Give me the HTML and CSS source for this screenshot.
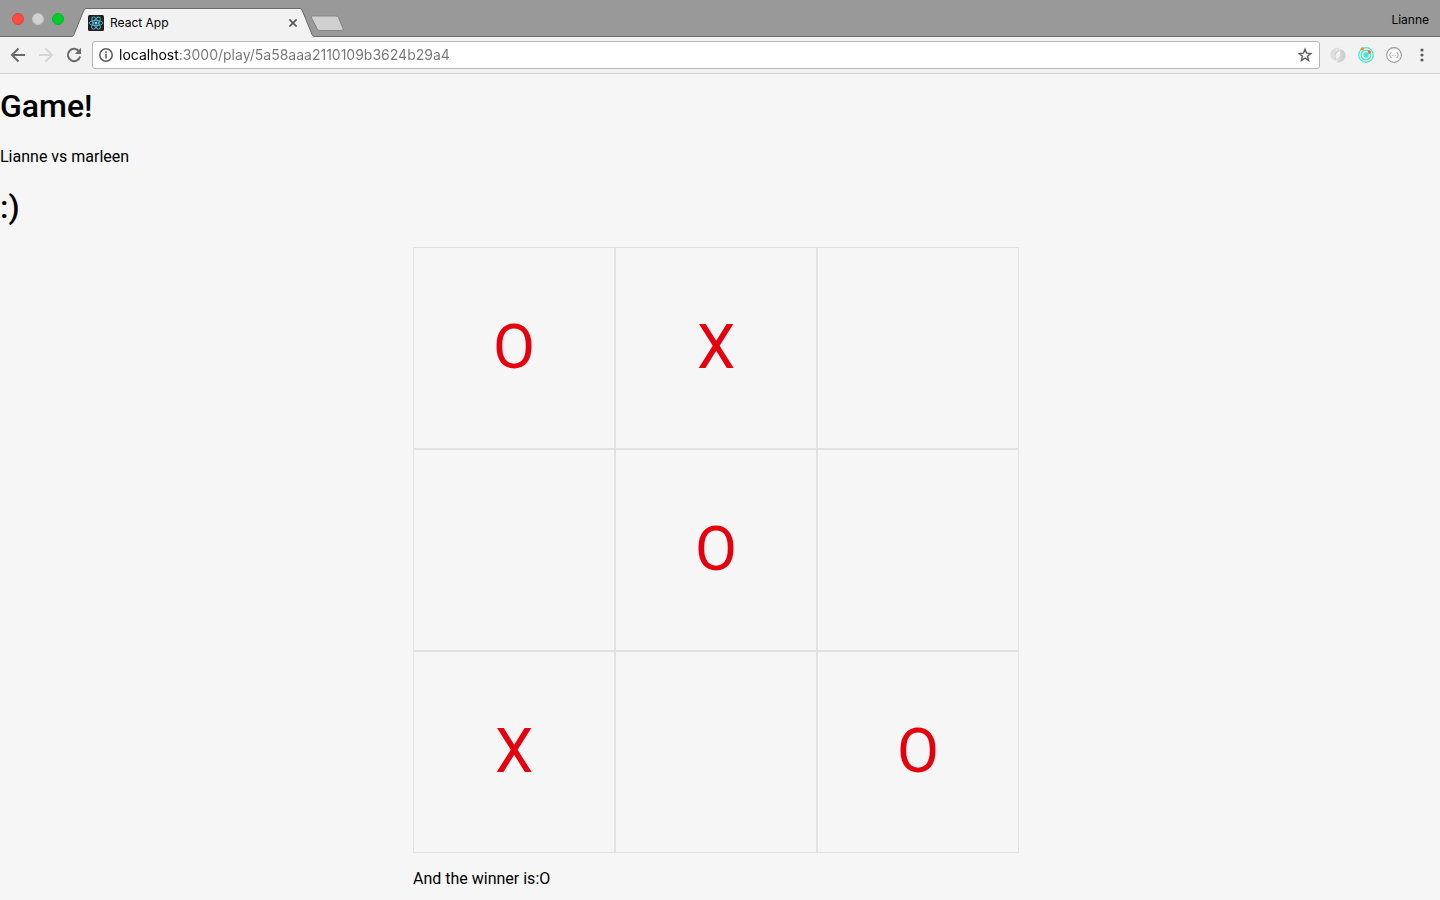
FILE: index.html
```html
<!DOCTYPE html>
<html lang="en">
<head>
<meta charset="utf-8">
<title>React App</title>
<link rel="stylesheet" href="styles.css">
</head>
<body>
<header class="browser">
  <div class="tabstrip">
    <div class="lights">
      <button class="light light-close" aria-label="Close window"></button>
      <button class="light light-min" aria-label="Minimize window"></button>
      <button class="light light-max" aria-label="Zoom window"></button>
    </div>
    <div class="tab">
      <svg class="tab-edge" width="14" height="29" viewBox="0 0 14 29" aria-hidden="true"><path d="M0 28.500Q1.500 28 2 26.500L11.500 3Q12.500.500 14 .500V29H0z" fill="#f2f2f2"/><path d="M0 28.500Q1.500 28 2 26.500L11.500 3Q12.500.500 14 .500" fill="none" stroke="#6b6b6b"/></svg>
      <div class="tab-body">
        <svg width="16" height="16" viewBox="0 0 16 16" aria-hidden="true"><rect width="16" height="16" rx="1.500" fill="#222"/><g fill="none" stroke="#55b8d5" stroke-width=".9"><ellipse cx="8" cy="8" rx="6.800" ry="2.600"/><ellipse cx="8" cy="8" rx="6.800" ry="2.600" transform="rotate(60 8 8)"/><ellipse cx="8" cy="8" rx="6.800" ry="2.600" transform="rotate(120 8 8)"/></g><circle cx="8" cy="8" r="1.500" fill="#61dafb"/></svg>
        <span class="tab-title">React App</span>
        <button class="icon-button" aria-label="Close tab"><svg width="8" height="8" viewBox="0 0 8 8"><path d="M.400.400l7.200 7.200M7.600.400L.400 7.600" stroke="#555" stroke-width="1.600"/></svg></button>
      </div>
      <svg class="tab-edge" width="14" height="29" viewBox="0 0 14 29" aria-hidden="true"><path d="M14 28.500Q12.500 28 12 26.500L2.500 3Q1.500.500 0 .500V29H14z" fill="#f2f2f2"/><path d="M14 28.500Q12.500 28 12 26.500L2.500 3Q1.500.500 0 .500" fill="none" stroke="#6b6b6b"/></svg>
    </div>
    <button class="icon-button new-tab" aria-label="New tab"><svg width="36" height="17" viewBox="0 0 36 17"><path d="M3.500 1H27Q28.800 1 29.500 2.500L34 13.500Q35 15.500 33 15.500H11Q9 15.500 8.300 14L2.500 2.800Q2 1 3.500 1z" fill="#d0d0d0" stroke="#858585"/></svg></button>
    <span class="profile">Lianne</span>
  </div>
  <div class="toolbar">
    <nav class="nav" aria-label="History">
      <button class="icon-button" aria-label="Back"><svg width="16" height="16" viewBox="0 0 16 16"><path d="M15 8H2.500M8.500 1.500L2 8l6.500 6.500" fill="none" stroke="#6a6a6a" stroke-width="2"/></svg></button>
      <button class="icon-button" aria-label="Forward"><svg width="16" height="16" viewBox="0 0 16 16"><path d="M1 8h12.500M7.500 1.500L14 8l-6.500 6.500" fill="none" stroke="#d5d5d5" stroke-width="2"/></svg></button>
      <button class="icon-button" aria-label="Reload"><svg width="16" height="16" viewBox="0 0 16 16"><path d="M13.200 4.400A6.200 6.200 0 1 0 14.100 9.500" fill="none" stroke="#6a6a6a" stroke-width="2"/><path d="M15 .800V7H8.800z" fill="#6a6a6a"/></svg></button>
    </nav>
    <div class="omnibox">
      <svg width="14" height="14" viewBox="0 0 14 14" aria-hidden="true"><circle cx="7" cy="7" r="6.200" fill="none" stroke="#5c5c5c" stroke-width="1.500"/><path d="M7 6v4.500M7 3.300v1.700" stroke="#5c5c5c" stroke-width="1.600"/></svg>
      <input class="url" type="text" aria-label="Address" value="localhost:3000/play/5a58aaa2110109b3624b29a4">
      <button class="icon-button" aria-label="Bookmark"><svg width="16" height="16" viewBox="0 0 16 16"><path d="M8 2.200l1.600 4 4.200.300-3.200 2.800 1 4.200L8 11.200l-3.600 2.300 1-4.200-3.200-2.800 4.200-.300z" fill="none" stroke="#5c5c5c" stroke-width="1.400"/></svg></button>
    </div>
    <div class="extensions">
      <button class="icon-button" aria-label="Refresh extension"><svg width="16" height="16" viewBox="0 0 16 16"><path d="M10 .800C4 0 0 3.500.300 8c.300 3.500 2.500 5.500 5.700 6C2.500 9 4 3.500 10 .800z" fill="#dedede"/><path d="M6 15.200c6 .800 10-2.700 9.700-7.200-.300-3.500-2.500-5.500-5.700-6 3.500 5 2 10.500-4 13.200z" fill="#d0d0d0"/><path d="M6 13Q2.500 7 9 3M10 3q3.500 6-3 10" fill="none" stroke="#d2d2d2" stroke-width="1.500"/></svg></button>
      <button class="icon-button" aria-label="Orbit extension"><svg width="16" height="16" viewBox="0 0 16 16"><g fill="none" stroke="#3eeacb" stroke-width="1.200"><circle cx="8" cy="8" r="7.300"/><circle cx="8" cy="8" r="4.900"/></g><circle cx="8" cy="8" r="2.700" fill="#3eeacb"/><circle cx="4.300" cy="1.800" r="1.600" fill="#ff8a00"/><circle cx="11.300" cy="5" r="1.700" fill="#ff6530"/></svg></button>
      <button class="icon-button" aria-label="JSON extension"><svg width="16" height="16" viewBox="0 0 16 16"><circle cx="8" cy="8" r="7.400" fill="#fafafa" stroke="#999" stroke-width="1.100"/><path d="M5.500 5.500q-1.200 0-1.200 1.200T3.500 8q.800 0 .800 1.300t1.200 1.200M10.500 5.500q1.200 0 1.200 1.200T12.500 8q-.800 0-.800 1.300t-1.200 1.200M6.500 8.500h.8M8.700 8.500h.8" fill="none" stroke="#999" stroke-width=".9"/></svg></button>
      <button class="icon-button" aria-label="Menu"><svg width="16" height="16" viewBox="0 0 16 16"><g fill="#5c5c5c"><circle cx="8" cy="3" r="1.600"/><circle cx="8" cy="8" r="1.600"/><circle cx="8" cy="13" r="1.600"/></g></svg></button>
    </div>
  </div>
</header>
<main class="page">
  <h1 class="title">Game!</h1>
  <p class="players">Lianne vs marleen</p>
  <h1 class="title">:)</h1>
  <section class="game">
    <div class="board">
      <button class="cell" aria-label="Square 1: O">O</button>
      <button class="cell" aria-label="Square 2: X">X</button>
      <button class="cell" aria-label="Square 3"></button>
      <button class="cell" aria-label="Square 4"></button>
      <button class="cell" aria-label="Square 5: O">O</button>
      <button class="cell" aria-label="Square 6"></button>
      <button class="cell" aria-label="Square 7: X">X</button>
      <button class="cell" aria-label="Square 8"></button>
      <button class="cell" aria-label="Square 9: O">O</button>
    </div>
    <p class="winner">And the winner is:O</p>
  </section>
</main>
</body>
</html>
```
FILE: styles.css
```css
* {
  box-sizing: border-box;
}

body {
  margin: 0;
  background: #f6f6f6;
  color: #000;
  font: 16px/20px Roboto, sans-serif;
}

button {
  padding: 0;
  border: 0;
  background: none;
  font: inherit;
}

svg {
  display: block;
}

.browser {
  font: 12px/16px Inter, sans-serif;
}

.tabstrip {
  display: flex;
  align-items: flex-end;
  height: 37px;
  background: #999;
  box-shadow: inset 0 -1px #6b6b6b;
}

.lights {
  display: flex;
  align-self: center;
  gap: 8px;
  width: 72px;
  padding-left: 12px;
}

.light {
  width: 12px;
  height: 12px;
  border: 1px solid;
  border-radius: 50%;
}

.light-close {
  background: #ff4b42;
  border-color: #e33f36;
}

.light-min {
  background: #d2d2d2;
  border-color: #c2c2c2;
}

.light-max {
  background: #00cf28;
  border-color: #00b824;
}

.tab {
  display: flex;
  width: 242px;
}

.tab-edge {
  flex: none;
}

.tab-body {
  display: flex;
  flex: 1;
  align-items: center;
  gap: 6px;
  height: 29px;
  padding: 0 3px 0 2px;
  border-top: 1px solid #6b6b6b;
  background: #f2f2f2;
}

.tab-title {
  flex: 1;
}

.new-tab {
  margin: 0 0 5px -5px;
}

.profile {
  align-self: center;
  margin-left: auto;
  padding: 2px 11px 0 0;
}

.toolbar {
  display: flex;
  align-items: center;
  gap: 10px;
  height: 37px;
  padding: 0 10px;
  border-bottom: 1px solid #d2d2d2;
  background: #f2f2f2;
}

.nav,
.extensions {
  display: flex;
  gap: 12px;
}

.omnibox {
  display: flex;
  flex: 1;
  align-items: center;
  gap: 6px;
  height: 28px;
  padding: 0 6px;
  border: 1px solid #b5b5b5;
  border-radius: 3px;
  background: #fff;
}

.url {
  flex: 1;
  min-width: 0;
  padding: 0;
  border: 0;
  outline: 0;
  background: linear-gradient(90deg, #000 60px, #757575 60px) text;
  color: transparent;
  font: 14px/20px Inter, sans-serif;
}

.page {
  display: flow-root;
}

.title {
  margin: 12px 0 20px;
  font-size: 32px;
  line-height: 40px;
  font-weight: 500;
}

.players {
  margin: 21px 0 20px;
}

.game {
  width: 614px;
  margin: 0 auto;
}

.board {
  display: grid;
  grid-template-columns: repeat(3, 202px);
}

.cell {
  height: 202px;
  padding-bottom: 2px;
  border: 1px solid #e2e2e2;
  color: #e6000d;
  font-size: 61px;
  line-height: 72px;
}

.winner {
  margin: 16px 0 0;
}
```
